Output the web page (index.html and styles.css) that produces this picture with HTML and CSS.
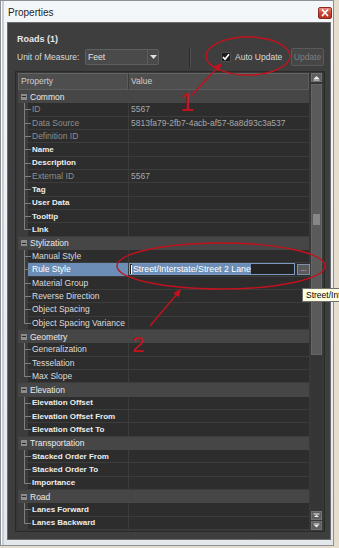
FILE: index.html
```html
<!DOCTYPE html>
<html>
<head>
<meta charset="utf-8">
<title>Properties</title>
<link rel="stylesheet" href="styles.css">
</head>
<body>
<div class="window">
  <div class="titlebar">
    <span class="title">Properties</span>
    <span class="close"><svg width="14" height="12" viewBox="0 0 14 12"><path d="M4.5 3 L9.5 8.5 M9.5 3 L4.5 8.5" stroke="#fff" stroke-width="1.8" stroke-linecap="round"/></svg></span>
  </div>
  <div class="panel">
    <div class="roads">Roads (1)</div>
    <div class="toolbar">
      <span class="lbl unit">Unit of Measure:</span>
      <div class="combo">
        <span class="combo-text">Feet</span>
        <span class="combo-btn"><svg width="7" height="4" viewBox="0 0 7 4"><path d="M0 0 H7 L3.5 4 Z" fill="#e0e0e0"/></svg></span>
      </div>
      <span class="sep"></span>
      <span class="check"><svg width="10" height="10" viewBox="0 0 10 10"><path d="M2 5 L4 7.2 L8 2.2" fill="none" stroke="#fff" stroke-width="1.6"/></svg></span>
      <span class="lbl auto">Auto Update</span>
      <span class="btn">Update</span>
    </div>
    <div class="grid">
      <div class="main">
        <div class="header">
          <div class="hcell hprop">Property</div>
          <div class="hcell hval">Value</div>
        </div>
        <div class="rows">
          <div class="row cat"><span class="tog"></span><span class="ctext">Common</span></div>
          <div class="row prop ro"><span class="gut"></span><span class="name">ID</span><span class="val">5567</span></div>
          <div class="row prop ro"><span class="gut"></span><span class="name">Data Source</span><span class="val">5813fa79-2fb7-4acb-af57-8a8d93c3a537</span></div>
          <div class="row prop ro"><span class="gut"></span><span class="name">Definition ID</span><span class="val"></span></div>
          <div class="row prop b"><span class="gut"></span><span class="name">Name</span><span class="val"></span></div>
          <div class="row prop b"><span class="gut"></span><span class="name">Description</span><span class="val"></span></div>
          <div class="row prop ro"><span class="gut"></span><span class="name">External ID</span><span class="val">5567</span></div>
          <div class="row prop b"><span class="gut"></span><span class="name">Tag</span><span class="val"></span></div>
          <div class="row prop b"><span class="gut"></span><span class="name">User Data</span><span class="val"></span></div>
          <div class="row prop b"><span class="gut"></span><span class="name">Tooltip</span><span class="val"></span></div>
          <div class="row prop b last"><span class="gut"></span><span class="name">Link</span><span class="val"></span></div>
          <div class="row cat"><span class="tog"></span><span class="ctext">Stylization</span></div>
          <div class="row prop"><span class="gut"></span><span class="name">Manual Style</span><span class="val"></span></div>
          <div class="row prop sel"><span class="gut"></span><span class="name">Rule Style</span><span class="val"><span class="editor"><span class="caret"></span><span class="seltext">Street/Interstate/Street 2 Lane</span></span><span class="dots">...</span></span></div>
          <div class="row prop"><span class="gut"></span><span class="name">Material Group</span><span class="val"></span></div>
          <div class="row prop"><span class="gut"></span><span class="name">Reverse Direction</span><span class="val"></span></div>
          <div class="row prop"><span class="gut"></span><span class="name">Object Spacing</span><span class="val"></span></div>
          <div class="row prop last"><span class="gut"></span><span class="name">Object Spacing Variance</span><span class="val"></span></div>
          <div class="row cat"><span class="tog"></span><span class="ctext">Geometry</span></div>
          <div class="row prop"><span class="gut"></span><span class="name">Generalization</span><span class="val"></span></div>
          <div class="row prop"><span class="gut"></span><span class="name">Tesselation</span><span class="val"></span></div>
          <div class="row prop last"><span class="gut"></span><span class="name">Max Slope</span><span class="val"></span></div>
          <div class="row cat"><span class="tog"></span><span class="ctext">Elevation</span></div>
          <div class="row prop b"><span class="gut"></span><span class="name">Elevation Offset</span><span class="val"></span></div>
          <div class="row prop b"><span class="gut"></span><span class="name">Elevation Offset From</span><span class="val"></span></div>
          <div class="row prop b last"><span class="gut"></span><span class="name">Elevation Offset To</span><span class="val"></span></div>
          <div class="row cat"><span class="tog"></span><span class="ctext">Transportation</span></div>
          <div class="row prop b"><span class="gut"></span><span class="name">Stacked Order From</span><span class="val"></span></div>
          <div class="row prop b"><span class="gut"></span><span class="name">Stacked Order To</span><span class="val"></span></div>
          <div class="row prop b last"><span class="gut"></span><span class="name">Importance</span><span class="val"></span></div>
          <div class="row cat"><span class="tog"></span><span class="ctext">Road</span></div>
          <div class="row prop b"><span class="gut"></span><span class="name">Lanes Forward</span><span class="val"></span></div>
          <div class="row prop b last"><span class="gut"></span><span class="name">Lanes Backward</span><span class="val"></span></div>
        </div>
      </div>
      <div class="vscroll">
        <span class="sbtn"><svg width="9" height="7" viewBox="0 0 9 7"><path d="M1.5 5 H7.5 L4.5 2 Z" fill="#f0f0f0"/><rect x="1.5" y="5.5" width="6" height="1" fill="#f0f0f0"/></svg></span>
        <span class="thumb"><span class="grip"></span></span>
        <span class="track"></span>
        <span class="sbtn"><svg width="9" height="7" viewBox="0 0 9 7"><rect x="1.5" y="1.5" width="6" height="1" fill="#f0f0f0"/><path d="M2 5 H7 L4.5 2.8 Z" fill="#f0f0f0"/></svg></span>
        <span class="sbtn"><svg width="9" height="7" viewBox="0 0 9 7"><rect x="1.5" y="1.5" width="6" height="1" fill="#f0f0f0"/><path d="M2 3 H7 L4.5 5.4 Z" fill="#f0f0f0"/></svg></span>
      </div>
    </div>
  </div>
</div>
<div class="tooltip">Street/Interstate/Street 2 Lane</div>
<svg class="notes" width="339" height="548" viewBox="0 0 339 548">
  <g fill="none" stroke="#c3121d" stroke-width="1.4">
    <ellipse cx="248" cy="56" rx="42" ry="19"/>
    <ellipse cx="221" cy="266" rx="104" ry="23"/>
    <line x1="192" y1="95" x2="218" y2="67"/>
    <line x1="150" y1="326" x2="177" y2="294"/>
  </g>
  <g fill="#c3121d">
    <polygon points="222,63 218.9,71.2 213.9,66.3"/>
    <polygon points="181,289 178.6,297.3 173.2,292.9"/>
    <text class="num" x="180" y="111" font-size="25">1</text>
    <text class="num" x="132" y="352" font-size="22">2</text>
  </g>
</svg>
</body>
</html>
```

FILE: styles.css
```css
* { box-sizing: border-box; }
html, body { margin: 0; padding: 0; }
body {
  width: 339px;
  height: 548px;
  overflow: hidden;
  position: relative;
  background: #e6ddcd;
  font-family: "Liberation Sans", Arial, sans-serif;
}
.window {
  width: 334px;
  height: 546px;
  border: 1px solid #8b9096;
  background: linear-gradient(#f4f7fa, #e3e8ed);
  box-shadow: inset 1px 0 0 #ffffff, inset 3px 0 0 #c9ced4;
}
.titlebar {
  height: 21px;
  display: flex;
  justify-content: space-between;
  align-items: center;
  padding: 0 1px 0 7px;
}
.title { font-size: 10px; color: #1e1e1e; padding-top: 2px; }
.close {
  width: 14px;
  height: 12px;
  margin-top: 3px;
  display: flex;
  border: 1px solid #8a2a22;
  border-radius: 2px;
  background: linear-gradient(#e88b7c, #c9402f 55%, #b8321f);
}
.close svg { display: block; margin: -1px; }
.panel {
  margin-left: 6px;
  width: 324px;
  height: 518px;
  border: 1px solid #6c6c6c;
  background: #3e3e3e;
}
.roads {
  height: 22px;
  padding: 10px 0 0 9px;
  font-size: 9px;
  font-weight: bold;
  line-height: 12px;
  color: #e6e6e6;
}
.toolbar {
  display: flex;
  align-items: center;
  height: 18px;
  margin-top: 3px;
  padding-left: 9px;
  font-size: 8.5px;
  color: #dadada;
}
.unit { width: 68px; }
.combo {
  width: 74px;
  height: 16px;
  display: flex;
  align-items: stretch;
  border: 1px solid #5f5f5f;
  border-radius: 2px;
  background: #4a4a4a;
}
.combo-text { flex: 1; padding-left: 2px; line-height: 14px; color: #e4e4e4; }
.combo-btn {
  width: 11px;
  border-left: 1px solid #5c5c5c;
  display: flex;
  align-items: center;
  justify-content: center;
}
.sep {
  width: 2px;
  height: 19px;
  margin-left: 30px;
  border-left: 1px solid #2c2c2c;
  border-right: 1px solid #505050;
}
.check {
  width: 10px;
  height: 10px;
  margin-left: 30px;
  background: #1c1c1c;
  border: 1px solid #4c4c4c;
  display: flex;
}
.check svg { margin: -1px; }
.auto { margin-left: 4px; }
.btn {
  margin-left: auto;
  margin-right: 6px;
  width: 33px;
  height: 18px;
  border: 1px solid #5a5a5a;
  border-radius: 2px;
  background: #464646;
  color: #7e7e7e;
  line-height: 16px;
  text-align: center;
}
.grid {
  margin: 5px 0 0 7px;
  width: 310px;
  height: 461px;
  border: 1px solid #2a2a2a;
  padding: 1px 2px;
  display: flex;
  gap: 2px;
  background: #383838;
}
.main { width: 291px; display: flex; flex-direction: column; }
.header { display: flex; height: 17px; }
.hcell {
  height: 17px;
  background: #4e4e4e;
  border: 1px solid #5d5d5d;
  border-top-color: #646464;
  font-size: 8.5px;
  line-height: 15px;
  color: #cfcfcf;
  padding-left: 2px;
}
.hprop { width: 110px; }
.hval { width: 181px; border-left: 1px solid #3a3a3a; }
.row {
  height: 13.34px;
  display: flex;
  align-items: center;
  font-size: 8.5px;
  white-space: nowrap;
}
.cat { background: #464646; color: #ececec; }
.tog {
  width: 6px;
  height: 6px;
  margin-left: 3px;
  background: #8c8c8c;
  position: relative;
}
.tog::after {
  content: "";
  position: absolute;
  left: 1px;
  top: 2.5px;
  width: 4px;
  height: 1px;
  background: #2a2a2a;
}
.ctext { margin-left: 3px; }
.prop {
  background: #2d2d2d;
  border-bottom: 1px solid #3c3c3c;
  align-items: stretch;
  color: #dcdcdc;
}
.gut {
  width: 10px;
  flex: none;
  background: #3c3c3c;
  position: relative;
}
.gut::before {
  content: "";
  position: absolute;
  left: 6px;
  top: 0;
  bottom: -1px;
  width: 1px;
  background: #7e7e7e;
}
.gut::after {
  content: "";
  position: absolute;
  left: 6px;
  top: 6px;
  width: 7px;
  height: 1px;
  background: #7e7e7e;
}
.last .gut::before { bottom: auto; height: 7px; }
.name {
  width: 100px;
  flex: none;
  padding-left: 4px;
  display: flex;
  align-items: center;
}
.val {
  flex: 1;
  border-left: 1px solid #3c3c3c;
  padding-left: 2px;
  display: flex;
  align-items: center;
  color: #a8a8a8;
}
.ro .name { color: #8e8e8e; }
.b .name { font-weight: bold; font-size: 8px; color: #ededed; }
.sel .name { background: #6b8db6; color: #ffffff; }
.sel .val { padding-left: 0; }
.editor {
  width: 166px;
  height: 12px;
  border: 1px solid #7b9bc3;
  background: #232323;
  display: flex;
  align-items: center;
}
.caret { width: 1px; height: 9px; background: #ffffff; margin-left: 1px; }
.seltext {
  background: #6b8db6;
  color: #ffffff;
  font-size: 8.8px;
  line-height: 10px;
  padding-left: 1px;
}
.dots {
  width: 13px;
  height: 11px;
  margin-left: 2px;
  background: #5a5a5a;
  border: 1px solid #7f8fa6;
  color: #e0e0e0;
  font-size: 7px;
  line-height: 7px;
  text-align: center;
}
.vscroll {
  width: 11px;
  display: flex;
  flex-direction: column;
  gap: 1px;
  background: #353535;
}
.sbtn {
  height: 9px;
  flex: none;
  background: #5e5e5e;
  border: 1px solid #727272;
  display: flex;
  align-items: center;
  justify-content: center;
}
.sbtn svg { display: block; }
.thumb {
  margin-top: 1px;
  height: 271px;
  flex: none;
  background: #5a5a5a;
  border: 1px solid #656565;
  display: flex;
  align-items: center;
  justify-content: center;
}
.grip {
  width: 7px;
  height: 11px;
  background-image: radial-gradient(circle, #8a8a8a 0.7px, transparent 0.8px);
  background-size: 2px 2px;
}
.track { flex: 1; }
.tooltip {
  position: absolute;
  left: 302px;
  top: 288px;
  height: 14px;
  padding: 0 3px;
  background: #ffffe1;
  border: 1px solid #6e6e6e;
  color: #000000;
  font-size: 8.5px;
  line-height: 12px;
  white-space: nowrap;
}
.notes {
  position: absolute;
  left: 0;
  top: 0;
  pointer-events: none;
}
.num { font-family: "Liberation Sans", Arial, sans-serif; }
```
